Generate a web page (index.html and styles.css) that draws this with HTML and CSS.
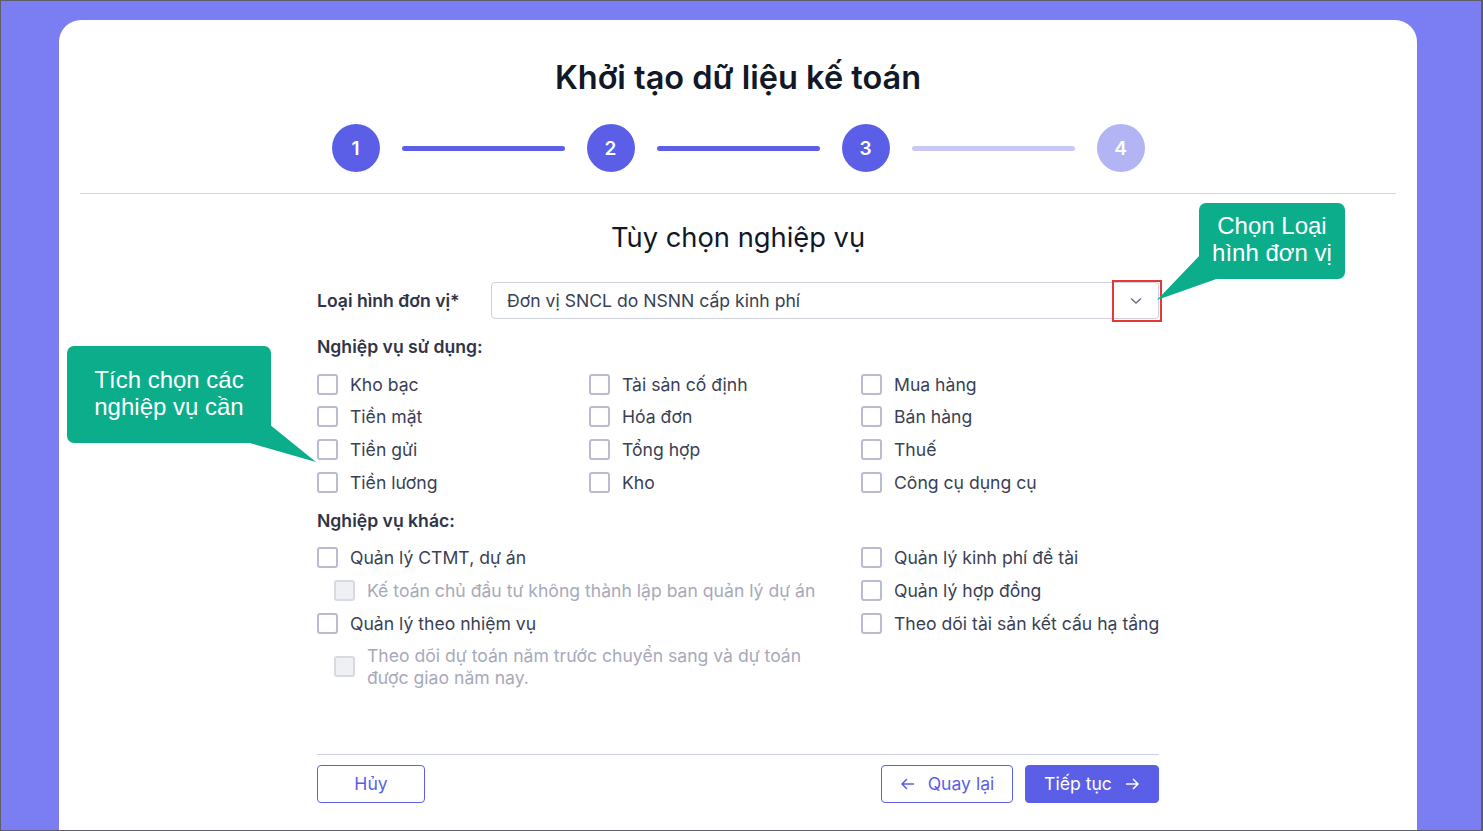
FILE: index.html
```html
<!DOCTYPE html>
<html>
<head>
  <meta charset="UTF-8">
  <title>Khởi tạo dữ liệu kế toán</title>
  <link rel="stylesheet" href="styles.css">
</head>
<body>
  <div class="frame">
    <div class="card">
      <h1 class="title">Khởi tạo dữ liệu kế toán</h1>

      <div class="steps">
        <span class="step">1</span>
        <span class="step-line"></span>
        <span class="step">2</span>
        <span class="step-line"></span>
        <span class="step">3</span>
        <span class="step-line todo"></span>
        <span class="step todo">4</span>
      </div>

      <hr class="divider">

      <h2 class="subtitle">Tùy chọn nghiệp vụ</h2>

      <div class="form">
        <div class="field-row">
          <label class="field-label">Loại hình đơn vị*</label>
          <div class="select">
            <span>Đơn vị SNCL do NSNN cấp kinh phí</span>
            <svg class="chevron" width="12" height="8" viewBox="0 0 12 8">
              <path d="M1 1.5 L6 6 L11 1.5" fill="none" stroke="#6b7086" stroke-width="1.4"/>
            </svg>
            <span class="highlight"></span>
          </div>
        </div>

        <div class="group-title">Nghiệp vụ sử dụng:</div>
        <div class="grid3">
          <div class="col">
            <label class="check"><span class="box"></span>Kho bạc</label>
            <label class="check"><span class="box"></span>Tiền mặt</label>
            <label class="check"><span class="box"></span>Tiền gửi</label>
            <label class="check"><span class="box"></span>Tiền lương</label>
          </div>
          <div class="col">
            <label class="check"><span class="box"></span>Tài sản cố định</label>
            <label class="check"><span class="box"></span>Hóa đơn</label>
            <label class="check"><span class="box"></span>Tổng hợp</label>
            <label class="check"><span class="box"></span>Kho</label>
          </div>
          <div class="col">
            <label class="check"><span class="box"></span>Mua hàng</label>
            <label class="check"><span class="box"></span>Bán hàng</label>
            <label class="check"><span class="box"></span>Thuế</label>
            <label class="check"><span class="box"></span>Công cụ dụng cụ</label>
          </div>
        </div>

        <div class="group-title">Nghiệp vụ khác:</div>
        <div class="grid2">
          <div class="col">
            <label class="check"><span class="box"></span>Quản lý CTMT, dự án</label>
            <label class="check sub disabled"><span class="box"></span>Kế toán chủ đầu tư không thành lập ban quản lý dự án</label>
            <label class="check"><span class="box"></span>Quản lý theo nhiệm vụ</label>
            <label class="check sub disabled multi"><span class="box"></span><span class="multi-text">Theo dõi dự toán năm trước chuyển sang và dự toán được giao năm nay.</span></label>
          </div>
          <div class="col">
            <label class="check"><span class="box"></span>Quản lý kinh phí đề tài</label>
            <label class="check"><span class="box"></span>Quản lý hợp đồng</label>
            <label class="check"><span class="box"></span>Theo dõi tài sản kết cấu hạ tầng</label>
          </div>
        </div>

        <div class="footer">
          <button class="btn">Hủy</button>
          <div class="footer-right">
            <button class="btn btn-back">
              <svg width="16" height="14" viewBox="0 0 16 14"><path d="M14 7 H2 M7 2 L2 7 L7 12" fill="none" stroke="#5b5fe8" stroke-width="1.5"/></svg>
              Quay lại
            </button>
            <button class="btn btn-primary">
              Tiếp tục
              <svg width="16" height="14" viewBox="0 0 16 14"><path d="M2 7 H14 M9 2 L14 7 L9 12" fill="none" stroke="#ffffff" stroke-width="1.5"/></svg>
            </button>
          </div>
        </div>
      </div>
    </div>

    <!-- callouts drawn over the form -->
    <div class="callout callout-type">Chọn Loại<br>hình đơn vị</div>
    <div class="callout callout-check">Tích chọn các<br>nghiệp vụ cần</div>
    <svg class="tails" width="1483" height="831" viewBox="0 0 1483 831">
      <polygon points="1201,254 1157,300 1222,277" fill="#0cad8b"/>
      <polygon points="269,424 316,462 243,441" fill="#0cad8b"/>
    </svg>
  </div>
</body>
</html>
```

FILE: styles.css
```css
* {
  box-sizing: border-box;
}
body {
  margin: 0;
  font-family: Inter, "Noto Sans", sans-serif;
  color: #3a3f55;
}
.frame {
  position: relative;
  width: 1483px;
  height: 831px;
  border: 1px solid #5e5e66;
  border-right-width: 2px;
  background-color: #7b7ef2;
  padding-top: 19px;
  overflow: hidden;
}
.card {
  margin-left: 58px;
  width: 1358px;
  height: 900px;
  background: #fff;
  border-radius: 22px 22px 0 0;
  padding: 38px 21px 0;
}
.title {
  margin: 0;
  text-align: center;
  font-size: 32.5px;
  line-height: 40px;
  font-weight: 600;
  color: #111827;
}
.steps {
  display: flex;
  justify-content: center;
  align-items: center;
  gap: 22px;
  margin-top: 26px;
}
.step {
  width: 48px;
  height: 48px;
  border-radius: 50%;
  background: #5b5fe8;
  color: #fff;
  font-size: 19px;
  font-weight: 600;
  display: flex;
  align-items: center;
  justify-content: center;
}
.step.todo {
  background: #b2b4f4;
}
.step-line {
  width: 163px;
  height: 5px;
  border-radius: 3px;
  background: #5b5fe8;
}
.step-line.todo {
  background: #c7c8f7;
}
.divider {
  margin: 21px 0 0;
  border: none;
  border-top: 1px solid #d4d5dc;
}
.subtitle {
  margin: 28px 0 0;
  text-align: center;
  font-size: 27.3px;
  line-height: 32px;
  font-weight: 400;
  color: #111827;
}
.form {
  width: 842px;
  margin: 28px auto 0;
}
.field-row {
  display: flex;
  align-items: center;
}
.field-label {
  width: 174px;
  font-size: 17.6px;
  font-weight: 600;
  color: #2f3447;
}
.select {
  position: relative;
  flex: 1;
  height: 37px;
  border: 1px solid #cfd1dc;
  border-radius: 4px;
  display: flex;
  align-items: center;
  justify-content: space-between;
  padding: 0 16px 0 15px;
  font-size: 17.6px;
}
.chevron {
  display: block;
}
.highlight {
  position: absolute;
  right: -4px;
  top: -3px;
  width: 50px;
  height: 42px;
  border: 2px solid #e53935;
}
.group-title {
  margin-top: 16px;
  font-size: 17.6px;
  line-height: 24px;
  font-weight: 600;
  color: #2f3447;
}
.grid3 {
  display: grid;
  grid-template-columns: 272px 272px 1fr;
  margin-top: 9px;
}
.grid2 {
  display: grid;
  grid-template-columns: 544px 1fr;
  margin-top: 9px;
}
.col {
  display: flex;
  flex-direction: column;
}
.grid3 + .group-title {
  margin-top: 10px;
}
.check {
  display: flex;
  align-items: center;
  height: 32.67px;
  font-size: 17.6px;
  white-space: nowrap;
}
.box {
  flex: none;
  width: 21px;
  height: 21px;
  border: 2px solid #b9bbd0;
  border-radius: 3px;
  margin-right: 12px;
  background: #fff;
}
.check.sub {
  padding-left: 17px;
}
.check.disabled {
  color: #a7a9bb;
}
.check.disabled .box {
  background: #eff0f4;
  border-color: #d7d9e3;
}
.check.multi {
  height: auto;
  padding-top: 5px;
  white-space: normal;
}
.multi-text {
  width: 470px;
  line-height: 22px;
}
.footer {
  display: flex;
  justify-content: space-between;
  margin-top: 65px;
  padding-top: 10px;
  border-top: 1px solid #cdd0e6;
}
.footer-right {
  display: flex;
  gap: 12px;
}
.btn {
  height: 38px;
  min-width: 108px;
  padding: 0 16px;
  border: 1.5px solid #5b5fe8;
  border-radius: 4px;
  background: #fff;
  color: #5b5fe8;
  font-family: Inter, "Noto Sans", sans-serif;
  font-size: 17.6px;
  display: flex;
  align-items: center;
  justify-content: center;
  gap: 12px;
}
.btn-back {
  width: 132px;
}
.btn-primary {
  width: 134px;
  background: #5b5fe8;
  color: #fff;
}
.callout {
  position: absolute;
  background: #0cad8b;
  color: #fff;
  font-family: "Liberation Sans", Arial, sans-serif;
  font-size: 24px;
  line-height: 27px;
  text-align: center;
  border-radius: 7px;
}
.callout-type {
  left: 1198px;
  top: 202px;
  width: 146px;
  height: 76px;
  padding-top: 9px;
}
.callout-check {
  left: 66px;
  top: 345px;
  width: 204px;
  height: 97px;
  padding-top: 20px;
}
.tails {
  position: absolute;
  left: -1px;
  top: -1px;
  pointer-events: none;
}
```
